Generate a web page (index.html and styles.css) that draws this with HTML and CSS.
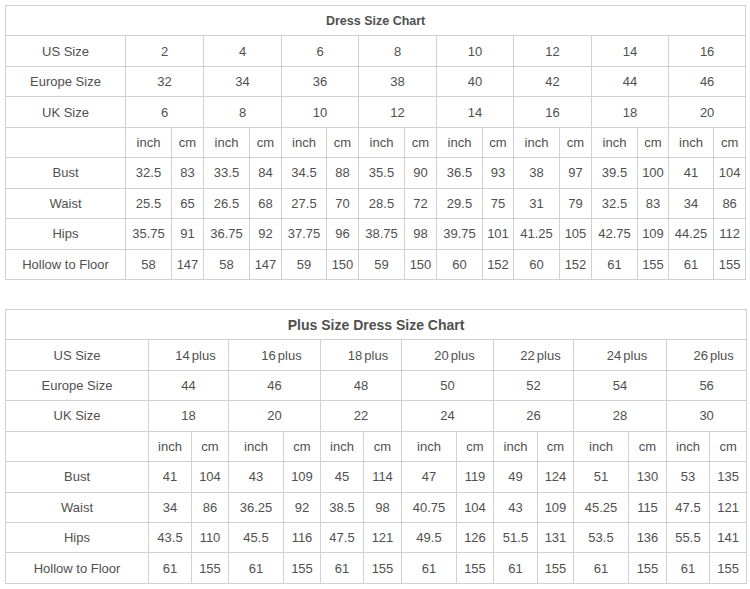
FILE: index.html
```html
<!DOCTYPE html>
<html>
<head>
<meta charset="utf-8">
<link rel="stylesheet" href="styles.css">
</head>
<body>
<table class="chart chart-std">
  <colgroup>
    <col class="c-label">
    <col class="w46"><col class="w32">
    <col class="w46"><col class="w32">
    <col class="w45"><col class="w32">
    <col class="w46"><col class="w32">
    <col class="w46"><col class="w31">
    <col class="w46"><col class="w32">
    <col class="w46"><col class="w31">
    <col class="w45"><col class="w32">
  </colgroup>
  <tr><th colspan="17" class="title">Dress Size Chart</th></tr>
  <tr><td>US Size</td><td colspan="2">2</td><td colspan="2">4</td><td colspan="2">6</td><td colspan="2">8</td><td colspan="2">10</td><td colspan="2">12</td><td colspan="2">14</td><td colspan="2">16</td></tr>
  <tr><td>Europe Size</td><td colspan="2">32</td><td colspan="2">34</td><td colspan="2">36</td><td colspan="2">38</td><td colspan="2">40</td><td colspan="2">42</td><td colspan="2">44</td><td colspan="2">46</td></tr>
  <tr><td>UK Size</td><td colspan="2">6</td><td colspan="2">8</td><td colspan="2">10</td><td colspan="2">12</td><td colspan="2">14</td><td colspan="2">16</td><td colspan="2">18</td><td colspan="2">20</td></tr>
  <tr><td></td><td>inch</td><td>cm</td><td>inch</td><td>cm</td><td>inch</td><td>cm</td><td>inch</td><td>cm</td><td>inch</td><td>cm</td><td>inch</td><td>cm</td><td>inch</td><td>cm</td><td>inch</td><td>cm</td></tr>
  <tr><td>Bust</td><td>32.5</td><td>83</td><td>33.5</td><td>84</td><td>34.5</td><td>88</td><td>35.5</td><td>90</td><td>36.5</td><td>93</td><td>38</td><td>97</td><td>39.5</td><td>100</td><td>41</td><td>104</td></tr>
  <tr><td>Waist</td><td>25.5</td><td>65</td><td>26.5</td><td>68</td><td>27.5</td><td>70</td><td>28.5</td><td>72</td><td>29.5</td><td>75</td><td>31</td><td>79</td><td>32.5</td><td>83</td><td>34</td><td>86</td></tr>
  <tr><td>Hips</td><td>35.75</td><td>91</td><td>36.75</td><td>92</td><td>37.75</td><td>96</td><td>38.75</td><td>98</td><td>39.75</td><td>101</td><td>41.25</td><td>105</td><td>42.75</td><td>109</td><td>44.25</td><td>112</td></tr>
  <tr><td>Hollow to Floor</td><td>58</td><td>147</td><td>58</td><td>147</td><td>59</td><td>150</td><td>59</td><td>150</td><td>60</td><td>152</td><td>60</td><td>152</td><td>61</td><td>155</td><td>61</td><td>155</td></tr>
</table>

<table class="chart chart-plus">
  <colgroup>
    <col class="c-label2">
    <col class="w43"><col class="w37">
    <col class="w55"><col class="w37">
    <col class="w43"><col class="w38">
    <col class="w55"><col class="w37">
    <col class="w44"><col class="w36">
    <col class="w55"><col class="w38">
    <col class="w43"><col class="w37">
  </colgroup>
  <tr><th colspan="15" class="title title-lg">Plus Size Dress Size Chart</th></tr>
  <tr><td>US Size</td><td colspan="2" class="plus">14<span class="suf">plus</span></td><td colspan="2" class="plus">16<span class="suf">plus</span></td><td colspan="2" class="plus">18<span class="suf">plus</span></td><td colspan="2" class="plus">20<span class="suf">plus</span></td><td colspan="2" class="plus">22<span class="suf">plus</span></td><td colspan="2" class="plus">24<span class="suf">plus</span></td><td colspan="2" class="plus">26<span class="suf">plus</span></td></tr>
  <tr><td>Europe Size</td><td colspan="2">44</td><td colspan="2">46</td><td colspan="2">48</td><td colspan="2">50</td><td colspan="2">52</td><td colspan="2">54</td><td colspan="2">56</td></tr>
  <tr><td>UK Size</td><td colspan="2">18</td><td colspan="2">20</td><td colspan="2">22</td><td colspan="2">24</td><td colspan="2">26</td><td colspan="2">28</td><td colspan="2">30</td></tr>
  <tr><td></td><td>inch</td><td>cm</td><td>inch</td><td>cm</td><td>inch</td><td>cm</td><td>inch</td><td>cm</td><td>inch</td><td>cm</td><td>inch</td><td>cm</td><td>inch</td><td>cm</td></tr>
  <tr><td>Bust</td><td>41</td><td>104</td><td>43</td><td>109</td><td>45</td><td>114</td><td>47</td><td>119</td><td>49</td><td>124</td><td>51</td><td>130</td><td>53</td><td>135</td></tr>
  <tr><td>Waist</td><td>34</td><td>86</td><td>36.25</td><td>92</td><td>38.5</td><td>98</td><td>40.75</td><td>104</td><td>43</td><td>109</td><td>45.25</td><td>115</td><td>47.5</td><td>121</td></tr>
  <tr><td>Hips</td><td>43.5</td><td>110</td><td>45.5</td><td>116</td><td>47.5</td><td>121</td><td>49.5</td><td>126</td><td>51.5</td><td>131</td><td>53.5</td><td>136</td><td>55.5</td><td>141</td></tr>
  <tr><td>Hollow to Floor</td><td>61</td><td>155</td><td>61</td><td>155</td><td>61</td><td>155</td><td>61</td><td>155</td><td>61</td><td>155</td><td>61</td><td>155</td><td>61</td><td>155</td></tr>
</table>
</body>
</html>
```

FILE: styles.css
```css
html, body {
  background: #ffffff;
}
body {
  margin: 5px 0 0 5px;
  font-family: "Liberation Sans", Arial, sans-serif;
  font-size: 13px;
  color: #505050;
}
.chart {
  border-collapse: collapse;
  table-layout: fixed;
}
.chart-std { width: 741px; }
.chart-plus { width: 742px; margin-top: 29px; }
.chart tr { height: 30.45px; }
.chart td, .chart th {
  border: 1px solid #d0d0d0;
  padding: 0;
  text-align: center;
  vertical-align: middle;
  font-weight: normal;
  white-space: nowrap;
  overflow: hidden;
}
.chart th.title { font-weight: bold; font-size: 12.5px; }
.chart th.title-lg { font-size: 14px; padding-top: 1px; }
.chart td.plus { padding-left: 14px; }
.suf { margin-left: 2px; }
.c-label { width: 120px; }
.c-label2 { width: 143px; }
.w31 { width: 31px; }
.w32 { width: 32px; }
.w36 { width: 36px; }
.w37 { width: 37px; }
.w38 { width: 38px; }
.w43 { width: 43px; }
.w44 { width: 44px; }
.w45 { width: 45px; }
.w46 { width: 46px; }
.w55 { width: 55px; }
```
